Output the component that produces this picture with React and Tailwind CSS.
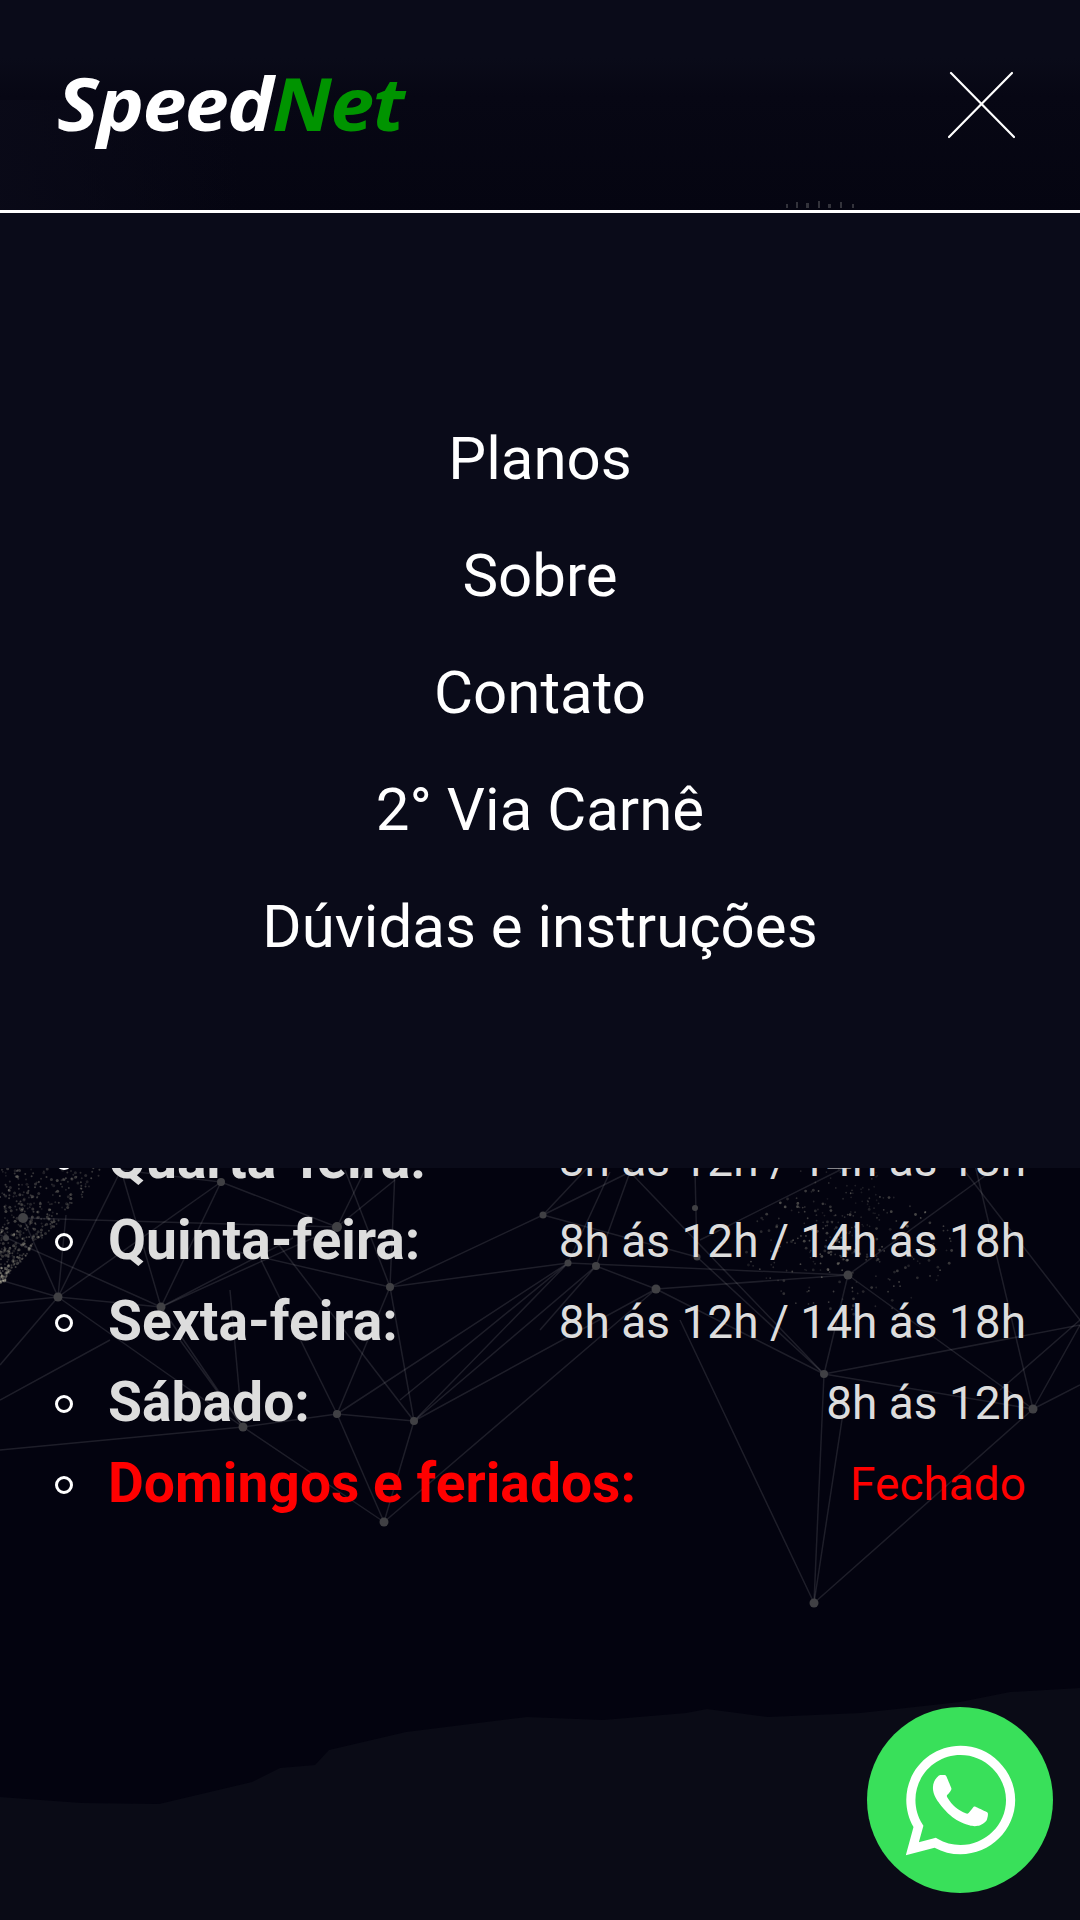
import React from "react";
import { FaWhatsapp } from "react-icons/fa";

const nodes = [[221,1182,4],[337,1227,5],[23,1218,5],[58,1297,4.5],[161,1307,4.5],[390,1287,4],[543,1215,3.5],[337,1414,4],[414,1421,4],[243,1427,4.5],[384,1522,4.5],[6,1238,3],[568,1263,3.5],[596,1266,4],[697,1257,3.5],[656,1289,4.5],[848,1275,4.5],[824,1374,4],[1033,1409,4.5],[814,1603,4.5],[630,1172,3],[695,1208,3]];
const edges = [
[221,1182,337,1227],[221,1182,58,1297],[221,1182,161,1307],[221,1182,121,1170],[23,1218,337,1227],[23,1218,58,1297],[58,1297,161,1307],[58,1297,0,1303],[58,1297,0,1365],[58,1297,121,1170],[161,1307,121,1170],[161,1307,337,1227],[58,1297,66,1215],[0,1235,161,1307],
[390,1287,543,1215],[390,1287,568,1263],[390,1287,337,1414],[390,1287,414,1421],[390,1287,345,1170],[390,1287,395,1170],[337,1414,414,1421],[337,1414,568,1263],[414,1421,596,1266],[414,1421,568,1263],[414,1421,656,1289],[337,1414,243,1427],[243,1427,0,1450],[243,1427,384,1522],[337,1414,384,1522],[414,1421,384,1522],[384,1522,656,1289],[243,1427,180,1340],[161,1307,243,1427],[58,1297,243,1427],[260,1258,337,1414],[414,1421,275,1240],[0,1400,110,1340],[161,1307,293,1238],[0,1280,58,1297],[230,1290,240,1400],[337,1227,365,1170],[337,1227,395,1180],[390,1287,230,1250],
[543,1215,630,1172],[543,1215,697,1257],[630,1172,824,1374],[568,1263,848,1275],[596,1266,656,1289],[656,1289,848,1275],[697,1257,824,1374],[656,1289,824,1374],[824,1374,1080,1325],[824,1374,1033,1409],[848,1275,1033,1409],[824,1374,848,1275],[680,1320,814,1603],[845,1400,814,1603],[1033,1409,814,1603],[1033,1409,975,1165],[1033,1409,1080,1325],[1033,1409,1080,1385],[960,1165,1080,1320],[840,1170,700,1240],[596,1266,630,1172],[568,1263,610,1172],[543,1215,590,1165],[695,1170,697,1257],[848,1275,1000,1165],[596,1266,540,1330],[568,1263,400,1400],[1080,1320,1000,1390],[814,1603,824,1374]
];

function rng(seed) {
  let s = seed;
  return () => {
    s = (s * 16807) % 2147483647;
    return s / 2147483647;
  };
}

function makeDots() {
  const r = rng(4242);
  const out = [];
  for (let i = 0; i < 280; i++) {
    const a = r() * Math.PI * 2;
    const d = Math.pow(r(), 0.9);
    out.push([848 + Math.cos(a) * d * 105, 1250 + Math.sin(a) * d * 65, r() < 0.3 ? 1.4 : 0.9, 0.1 + r() * 0.22]);
  }
  for (let i = 0; i < 60; i++) {
    out.push([790 + r() * 90, 1168 + r() * 70, 0.9, 0.08 + r() * 0.14]);
  }
  for (let i = 0; i < 420; i++) {
    const y = 1168 + r() * 115;
    const w = Math.max(6, 110 - (y - 1168) * 0.95);
    out.push([r() * w, y, r() < 0.3 ? 1.5 : 1, 0.1 + r() * 0.18]);
  }
  return out;
}
const dots = makeDots();

function Backdrop() {
  return (
    <svg className="absolute inset-0" width="1080" height="1920" viewBox="0 0 1080 1920">
      <defs>
        <linearGradient id="top" x1="0" y1="0" x2="0" y2="1">
          <stop offset="0" stopColor="#0a0b19" />
          <stop offset="0.27" stopColor="#0a0b19" />
          <stop offset="0.45" stopColor="#070714" />
          <stop offset="1" stopColor="#050511" />
        </linearGradient>
        <linearGradient id="blob" x1="0" y1="0" x2="1" y2="0">
          <stop offset="0" stopColor="#0a0a18" stopOpacity="0.9" />
          <stop offset="1" stopColor="#0a0a18" stopOpacity="0" />
        </linearGradient>
      </defs>
      <rect x="0" y="0" width="1080" height="213" fill="url(#top)" />
      <rect x="0" y="100" width="240" height="113" fill="url(#blob)" />
      <path d="M0 1797L82 1803L159 1804L252 1782L280 1768L315 1765L329 1750L406 1732L527 1717L603 1720L686 1713L707 1709L768 1717L860 1713L960 1702L1010 1692L1080 1688V1920H0Z" fill="#0a0b16" />
      {edges.map((e, i) => (
        <line key={i} x1={e[0]} y1={e[1]} x2={e[2]} y2={e[3]} stroke="#ffffff" strokeOpacity={0.11} strokeWidth="1.5" />
      ))}
      <g fill="#e6e2c8">
        {dots.map((d, i) => (
          <circle key={i} cx={d[0]} cy={d[1]} r={d[2]} opacity={d[3]} />
        ))}
      </g>
      {nodes.map((n, i) => (
        <circle key={i} cx={n[0]} cy={n[1]} r={n[2]} fill="#404044" />
      ))}
      <g fill="#d8d8d0" opacity="0.22">
        <rect x="786" y="204" width="2" height="4" />
        <rect x="796" y="202" width="2" height="6" />
        <rect x="806" y="203" width="3" height="5" />
        <rect x="818" y="201" width="2" height="7" />
        <rect x="828" y="204" width="3" height="4" />
        <rect x="840" y="202" width="2" height="6" />
        <rect x="852" y="204" width="2" height="4" />
      </g>
    </svg>
  );
}

const rows = [
  ["Quarta-feira:", "8h ás 12h / 14h ás 18h", false],
  ["Quinta-feira:", "8h ás 12h / 14h ás 18h", false],
  ["Sexta-feira:", "8h ás 12h / 14h ás 18h", false],
  ["Sábado:", "8h ás 12h", false],
  ["Domingos e feriados:", "Fechado", true],
];

const menu = ["Planos", "Sobre", "Contato", "2° Via Carnê", "Dúvidas e instruções"];

export default function App() {
  return (
    <div className="relative h-[1920px] w-[1080px] overflow-hidden bg-[#03030f] font-['Roboto',sans-serif]">
      <Backdrop />
      <header className="relative z-10 flex h-[213px] items-center justify-between border-b-[3px] border-white pb-[6px] pl-[57px] pr-[65px]">
        <div className="origin-left scale-x-[1.08] font-['Open_Sans',sans-serif] text-[73px] font-bold italic leading-none tracking-[-1.5px] text-white">
          Speed<span className="text-[#009400]">Net</span>
        </div>
        <svg className="mt-[6px]" width="68" height="68" viewBox="0 0 68 68" fill="none" stroke="#ffffff" strokeWidth="2.2" strokeLinecap="round">
          <line x1="4" y1="2" x2="67" y2="66" />
          <line x1="65" y1="2" x2="2" y2="66" />
        </svg>
      </header>
      <nav className="relative z-10 flex h-[955px] flex-col items-center justify-center bg-[#0a0b19] pt-[4px]">
        {menu.map((m) => (
          <a key={m} className="flex h-[117px] items-center text-[60px] leading-none text-white">
            {m}
          </a>
        ))}
      </nav>
      <ul className="relative mt-[-49px] pl-[55px] pr-[54px]">
        {rows.map(([d, h, closed]) => (
          <li key={d} className={`flex h-[81px] items-center justify-between ${closed ? "text-[#ff0000]" : "text-[#dddddd]"}`}>
            <span className="flex items-center">
              <span className="mr-[35px] mt-[3px] h-[18px] w-[18px] rounded-full border-[3px] border-white" />
              <span className="text-[55.2px] font-bold leading-none">{d}</span>
            </span>
            <span className="text-[46px] leading-none">{h}</span>
          </li>
        ))}
      </ul>
      <a className="absolute left-[867px] top-[1707px] z-20 flex h-[186px] w-[186px] items-center justify-center rounded-full bg-[#39e05a] text-white">
        <FaWhatsapp size={125} />
      </a>
    </div>
  );
}
